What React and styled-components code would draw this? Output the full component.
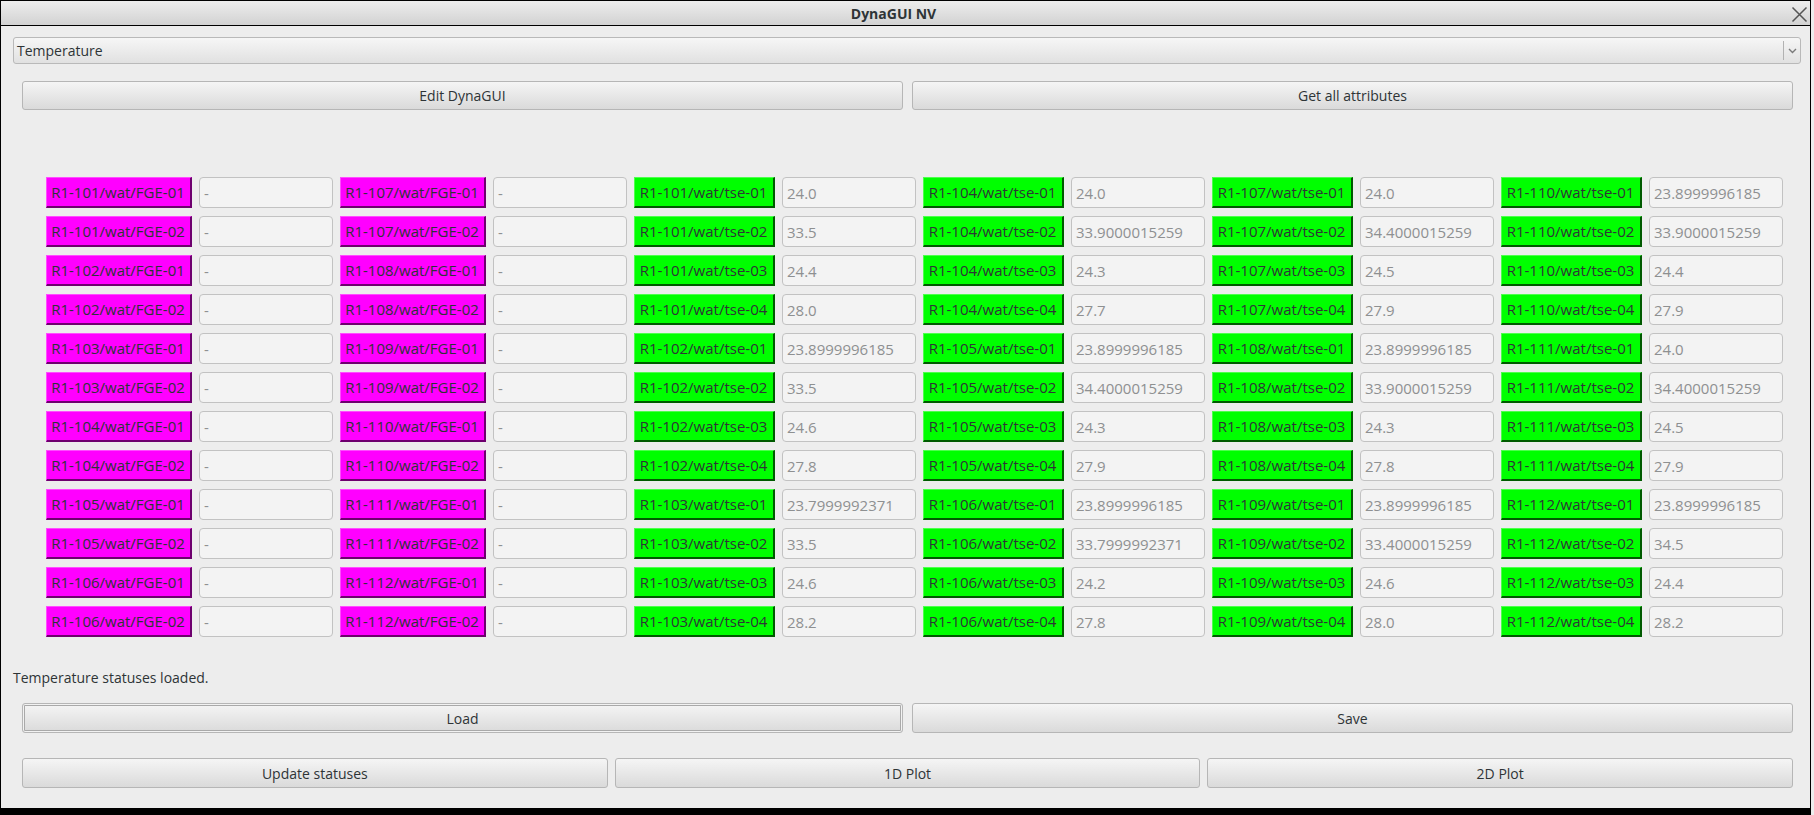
import React from "react";
import styled, { createGlobalStyle, css } from "styled-components";

const Global = createGlobalStyle`
  html, body { margin: 0; padding: 0; background: #ededed; }
  body { width: 1814px; height: 815px; overflow: hidden; font-family: "Open Sans", "DejaVu Sans", sans-serif; }
  * { box-sizing: border-box; }
`;

const Window = styled.div`
  width: 1811px;
  height: 815px;
  border: 1px solid #000;
  border-bottom: 7px solid #000;
  background: #ededed;
  display: flex;
  flex-direction: column;
`;

const TitleBar = styled.div`
  height: 25px;
  flex: none;
  border-bottom: 1px solid #000;
  background: linear-gradient(#ededed, #d2d2d2);
  display: flex;
  align-items: center;
  justify-content: center;
  position: relative;
  padding-right: 24px;
`;

const Title = styled.div`
  font-weight: 700;
  font-size: 14px;
  color: #2e3436;
`;

const CloseBtn = styled.svg`
  position: absolute;
  right: 2px;
  top: 5px;
`;

const Content = styled.div`
  flex: 1;
  padding: 11px 9px 0 12px;
  display: flex;
  flex-direction: column;
`;

const Combo = styled.div`
  height: 27px;
  border: 1px solid #b9b9b9;
  border-radius: 3px;
  background: linear-gradient(#f6f6f6, #e1e1e1);
  display: flex;
  align-items: center;
  padding-left: 3px;
  font-size: 14px;
  color: #2e3436;
`;

const ComboText = styled.div`
  flex: 1;
`;

const ComboArrow = styled.div`
  width: 17px;
  height: 19px;
  border-left: 1px solid #b2b2b2;
  display: flex;
  align-items: center;
  justify-content: center;
`;

const ButtonRow = styled.div`
  display: grid;
  grid-template-columns: ${(p) => `repeat(${p.$cols}, 1fr)`};
  column-gap: ${(p) => p.$gap}px;
  margin: ${(p) => p.$top}px 8px 0 9px;
`;

const Button = styled.div`
  height: ${(p) => p.$h}px;
  border: 1px solid #b6b6b6;
  border-radius: 3px;
  background: linear-gradient(#f5f5f5, #dadada);
  display: flex;
  align-items: center;
  justify-content: center;
  font-size: 14px;
  color: #2e3436;
  ${(p) =>
    p.$focus &&
    css`
      box-shadow: inset 0 0 0 1px #f2f2f2, inset 0 0 0 2px #a9a9a9;
    `}
`;

const Grid = styled.div`
  display: grid;
  grid-template-columns: 146px 134px 146px 134px 141px 134px 141px 134px 141px 134px 141px 134px;
  grid-auto-rows: 31px;
  column-gap: 7px;
  row-gap: 8px;
  margin: 67px 0 0 33px;
`;

const Tag = styled.div`
  display: flex;
  align-items: center;
  justify-content: center;
  font-size: 15px;
  color: #2e3436;
  white-space: nowrap;
  background: ${(p) => (p.$kind === "fge" ? "#ff00ff" : "#00ff00")};
  border-top: 1px solid ${(p) => (p.$kind === "fge" ? "#ff4dff" : "#4dff4d")};
  border-left: 1px solid ${(p) => (p.$kind === "fge" ? "#ff4dff" : "#4dff4d")};
  border-right: 2px solid ${(p) => (p.$kind === "fge" ? "#6e006e" : "#005a00")};
  border-bottom: 2px solid ${(p) => (p.$kind === "fge" ? "#6e006e" : "#005a00")};
  padding: 0 4px 0 3px;
`;

const Field = styled.div`
  border: 1px solid #c2c2c2;
  border-radius: 4px;
  background: #f3f3f3;
  display: flex;
  align-items: center;
  padding-left: 4px;
  font-size: 15px;
  color: #8e9091;
  white-space: nowrap;
`;

const Status = styled.div`
  margin-top: 31px;
  height: 20px;
  line-height: 20px;
  font-size: 14px;
  color: #2e3436;
  padding-left: 0;
`;

const fgeCols = [
  ["101", "102", "103", "104", "105", "106"],
  ["107", "108", "109", "110", "111", "112"],
];
const tseCols = [
  ["101", "102", "103"],
  ["104", "105", "106"],
  ["107", "108", "109"],
  ["110", "111", "112"],
];
const tseVals = [
  ["24.0", "33.5", "24.4", "28.0", "23.8999996185", "33.5", "24.6", "27.8", "23.7999992371", "33.5", "24.6", "28.2"],
  ["24.0", "33.9000015259", "24.3", "27.7", "23.8999996185", "34.4000015259", "24.3", "27.9", "23.8999996185", "33.7999992371", "24.2", "27.8"],
  ["24.0", "34.4000015259", "24.5", "27.9", "23.8999996185", "33.9000015259", "24.3", "27.8", "23.8999996185", "33.4000015259", "24.6", "28.0"],
  ["23.8999996185", "33.9000015259", "24.4", "27.9", "24.0", "34.4000015259", "24.5", "27.9", "23.8999996185", "34.5", "24.4", "28.2"],
];

function buildCells() {
  const cells = [];
  for (let r = 0; r < 12; r++) {
    fgeCols.forEach((col, ci) => {
      const name = `R1-${col[Math.floor(r / 2)]}/wat/FGE-0${(r % 2) + 1}`;
      cells.push(<Tag key={`f${ci}-${r}`} $kind="fge">{name}</Tag>);
      cells.push(<Field key={`fv${ci}-${r}`}>-</Field>);
    });
    tseCols.forEach((col, ci) => {
      const name = `R1-${col[Math.floor(r / 4)]}/wat/tse-0${(r % 4) + 1}`;
      cells.push(<Tag key={`t${ci}-${r}`} $kind="tse">{name}</Tag>);
      cells.push(<Field key={`tv${ci}-${r}`}>{tseVals[ci][r]}</Field>);
    });
  }
  return cells;
}

export default function App() {
  return (
    <>
      <Global />
      <Window>
        <TitleBar>
          <Title>DynaGUI NV</Title>
          <CloseBtn width="17" height="17" viewBox="0 0 17 17">
            <path d="M1.5 1.5 L15.5 15.5 M15.5 1.5 L1.5 15.5" stroke="#555" strokeWidth="1.5" fill="none" />
          </CloseBtn>
        </TitleBar>
        <Content>
          <Combo>
            <ComboText>Temperature</ComboText>
            <ComboArrow>
              <svg width="9" height="6" viewBox="0 0 9 6">
                <path d="M1 1 L4.5 4.5 L8 1" stroke="#7a7a7a" strokeWidth="1.4" fill="none" />
              </svg>
            </ComboArrow>
          </Combo>
          <ButtonRow $cols={2} $gap={9} $top={17}>
            <Button $h={29}>Edit DynaGUI</Button>
            <Button $h={29}>Get all attributes</Button>
          </ButtonRow>
          <Grid>{buildCells()}</Grid>
          <Status>Temperature statuses loaded.</Status>
          <ButtonRow $cols={2} $gap={9} $top={15}>
            <Button $h={30} $focus>Load</Button>
            <Button $h={30}>Save</Button>
          </ButtonRow>
          <ButtonRow $cols={3} $gap={7} $top={25}>
            <Button $h={30}>Update statuses</Button>
            <Button $h={30}>1D Plot</Button>
            <Button $h={30}>2D Plot</Button>
          </ButtonRow>
        </Content>
      </Window>
    </>
  );
}
